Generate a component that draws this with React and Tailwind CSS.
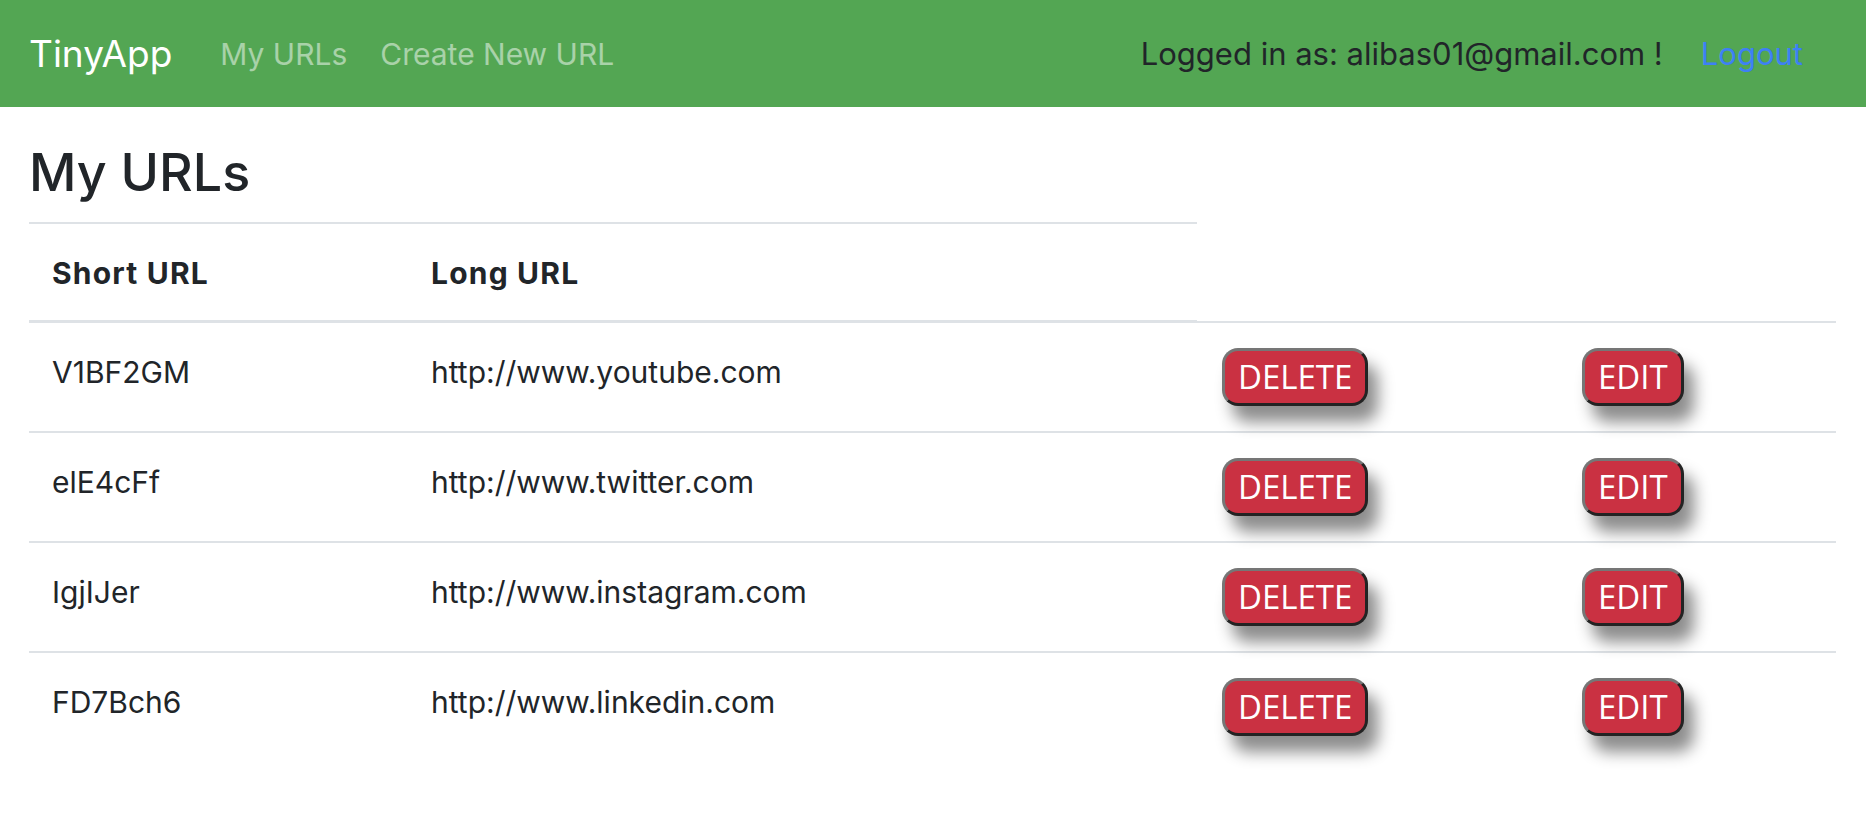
import React from "react";

const rows = [
  ["V1BF2GM", "http://www.youtube.com"],
  ["elE4cFf", "http://www.twitter.com"],
  ["IgjIJer", "http://www.instagram.com"],
  ["FD7Bch6", "http://www.linkedin.com"],
];

function Btn({ children }) {
  return (
    <button
      className="h-[58px] rounded-[16px] border-[3px] border-t-[#767676] border-l-[#767676] border-r-[#232323] border-b-[#232323] bg-[#ca3142] px-[13px] text-[33px] leading-none text-white shadow-[10px_16px_16px_rgba(0,0,0,0.45)]"
      style={{ fontFamily: '"Open Sans", sans-serif' }}
    >
      {children}
    </button>
  );
}

export default function App() {
  return (
    <div
      className="min-h-screen bg-white text-[#212529]"
      style={{ fontFamily: 'Inter, "Noto Sans", sans-serif' }}
    >
      <nav className="flex h-[107px] items-center bg-[#53a653] pl-[29px] pr-[63px]">
        <span className="text-[37px] leading-none text-white">TinyApp</span>
        <a className="ml-[48px] text-[30px] leading-none text-white/50">My URLs</a>
        <a className="ml-[33px] text-[30px] leading-none text-white/50">Create New URL</a>
        <span className="ml-auto text-[31px] leading-none text-[#212529]">
          Logged in as: alibas01@gmail.com !
        </span>
        <a className="ml-[38px] text-[31px] leading-none text-[#3d80f5]">Logout</a>
      </nav>
      <main className="px-[29px]">
        <h1 className="mt-[32px] mb-[16px] text-[52px] font-medium leading-[67px]">My URLs</h1>
        <table className="w-[1807px] table-fixed border-collapse">
          <colgroup>
            <col className="w-[379px]" />
            <col className="w-[789px]" />
            <col className="w-[361px]" />
            <col className="w-[278px]" />
          </colgroup>
          <thead>
            <tr>
              <th className="border-t-2 border-b-[3px] border-[#dee2e6] px-[23px] pt-[28px] pb-[25px] text-left text-[30px] font-bold leading-[43px] tracking-[1.2px]">
                Short URL
              </th>
              <th className="border-t-2 border-b-[3px] border-[#dee2e6] px-[23px] pt-[28px] pb-[25px] text-left text-[30px] font-bold leading-[43px] tracking-[1.2px]">
                Long URL
              </th>
            </tr>
          </thead>
          <tbody>
            {rows.map(([s, l], i) => (
              <tr key={s} className="h-[110px]">
                <td className={`${i === 0 ? "" : "border-t-2"} border-[#dee2e6] px-[23px] pt-[27px] align-top text-[30px] leading-[45px]`}>
                  {s}
                </td>
                <td className={`${i === 0 ? "" : "border-t-2"} border-[#dee2e6] px-[23px] pt-[27px] align-top text-[30px] leading-[45px]`}>
                  {l}
                </td>
                <td className="border-t-2 border-[#dee2e6] pl-[25px] pt-[25px] align-top">
                  <Btn>DELETE</Btn>
                </td>
                <td className="border-t-2 border-[#dee2e6] pl-[24px] pt-[25px] align-top">
                  <Btn>EDIT</Btn>
                </td>
              </tr>
            ))}
          </tbody>
        </table>
      </main>
    </div>
  );
}
